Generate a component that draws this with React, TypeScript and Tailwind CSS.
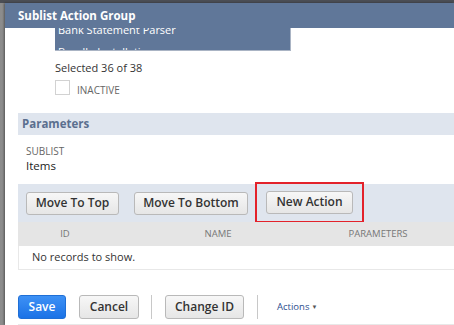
import React from "react";

const font = { fontFamily: '"Open Sans", "Noto Sans", Arial, sans-serif' };

function Btn({ children, className = "" }: { children: React.ReactNode; className?: string }) {
  return (
    <div
      className={
        "h-[23px] flex items-center justify-center rounded-[3px] border border-[#b9b9b9] bg-gradient-to-b from-[#f7f7f7] to-[#e6e6e6] text-[12px] font-semibold text-[#333] " +
        className
      }
    >
      {children}
    </div>
  );
}

export default function App() {
  return (
    <div className="w-[454px] h-[325px] overflow-hidden relative bg-gradient-to-r from-[#8c8c8c] to-[#b5b5b5]" style={font}>
      <div className="h-[3px] bg-[#4b4e55]" />
      <div className="ml-[5px] w-[449px] h-[322px] bg-white flex flex-col shadow-[-1px_0_2px_rgba(0,0,0,0.4)]">
        {/* header */}
        <div className="h-[25px] bg-[#607799] flex items-center pl-[13px] text-white text-[11.5px] font-bold relative z-10">
          Sublist Action Group
        </div>
        {/* dropdown list */}
        <div className="ml-[50px] w-[236px] h-[23px] bg-[#607799] overflow-hidden border-b border-r border-[#aab4c4]">
          <div className="-mt-[9px] pl-[3px] text-white text-[11px] leading-[22px]">
            <div>Bank Statement Parser</div>
            <div>Bundle Installation</div>
          </div>
        </div>
        <div className="ml-[50px] mt-[9px] text-[11px] leading-[16px] text-[#333]">Selected 36 of 38</div>
        <div className="ml-[50px] mt-[4px] flex items-end gap-[7px] h-[15px]">
          <div className="w-[15px] h-[15px] border border-[#d2d2d2] bg-white" />
          <div className="text-[10px] leading-[12px] text-[#666] -mb-[1px]">INACTIVE</div>
        </div>
        {/* parameters header */}
        <div className="ml-[13px] mt-[18px] h-[22px] bg-[#dfe5ee] flex items-center pl-[4px] text-[11.5px] font-bold text-[#5b6f8f]">
          Parameters
        </div>
        <div className="ml-[21px] mt-[10px] text-[10px] leading-[13px] text-[#666]">SUBLIST</div>
        <div className="ml-[21px] text-[11.5px] leading-[15px] text-[#222]">Items</div>
        {/* button bar */}
        <div className="ml-[13px] mt-[11px] h-[38px] bg-[#dfe5ee] flex items-center pl-[8px]">
          <Btn className="w-[93px]">Move To Top</Btn>
          <Btn className="ml-[15px] w-[114px]">Move To Bottom</Btn>
          <div className="ml-[7px] w-[109px] h-[41px] border-2 border-[#e3222a] flex items-center justify-center -mt-[2px]">
            <Btn className="w-[87px]">New Action</Btn>
          </div>
        </div>
        {/* table header */}
        <div className="ml-[13px] h-[24px] bg-[#e5e5e5] flex items-center text-[9.5px] text-[#777]">
          <div className="w-[94px] text-center">ID</div>
          <div className="w-[212px] text-center">NAME</div>
          <div className="w-[108px] text-center">PARAMETERS</div>
        </div>
        <div className="ml-[13px] h-[24px] border-l border-b border-[#e8e8e8] flex items-center pl-[13px] text-[11px] text-[#333]">
          No records to show.
        </div>
        {/* footer */}
        <div className="ml-[13px] mt-[25px] h-[24px] flex items-center">
          <div className="w-[48px] h-[24px] rounded-[3px] bg-gradient-to-b from-[#3d91f5] to-[#1a72e6] border border-[#1f6fd6] flex items-center justify-center text-white text-[12px] font-semibold">
            Save
          </div>
          <Btn className="ml-[13px] w-[60px] h-[24px]">Cancel</Btn>
          <div className="ml-[12px] w-px h-[24px] bg-[#c8c8c8]" />
          <Btn className="ml-[13px] w-[79px] h-[24px]">Change ID</Btn>
          <div className="ml-[13px] w-px h-[24px] bg-[#c8c8c8]" />
          <div className="ml-[19px] text-[9.5px] text-[#2c4e8e] flex items-center">
            Actions<span className="text-[6px] text-[#555] ml-[2px] mt-[1px]">▼</span>
          </div>
        </div>
        <div className="ml-[13px] mt-[5px] h-px bg-[#e8e8e8]" />
      </div>
    </div>
  );
}
